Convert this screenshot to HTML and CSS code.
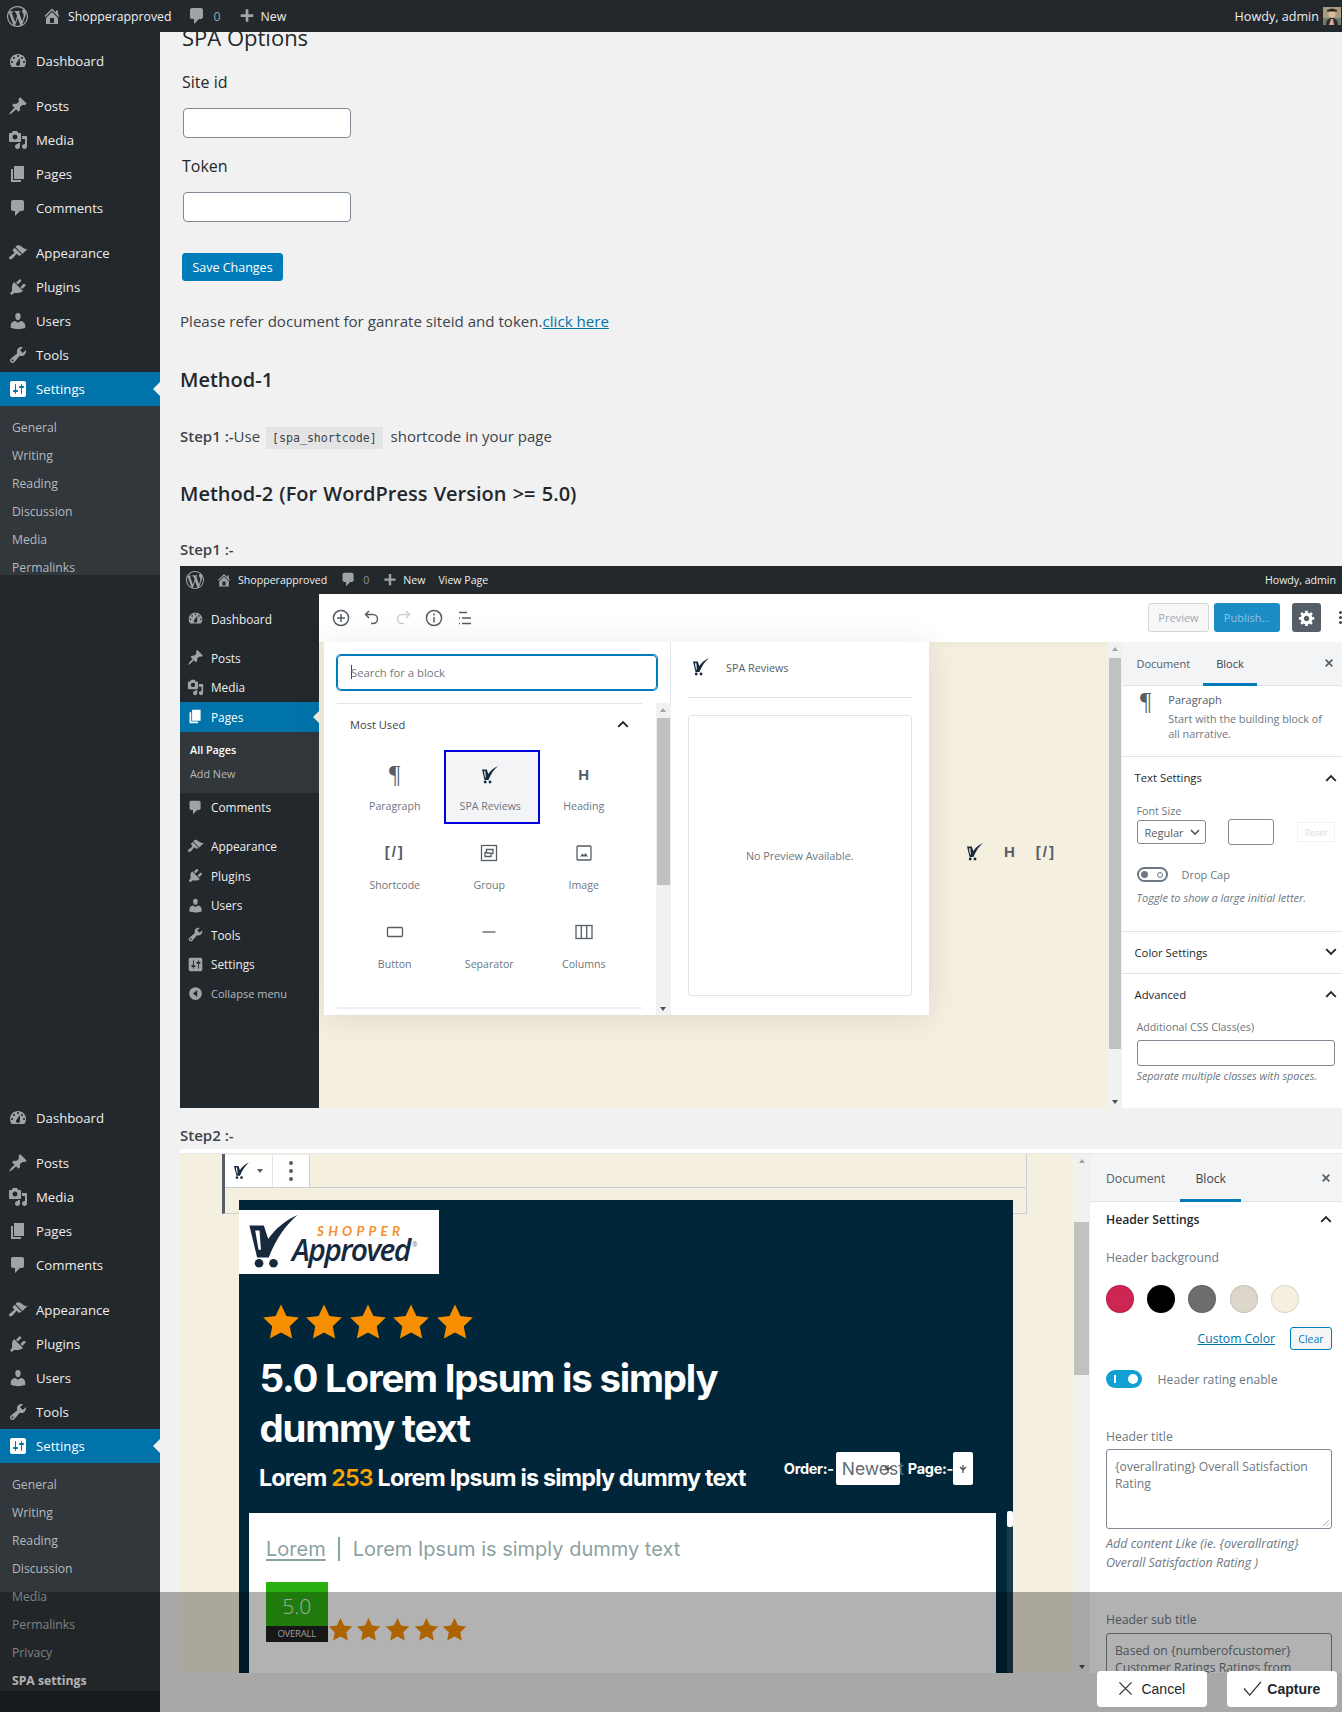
FILE: index.html
```html
<!DOCTYPE html>
<html>
<head>
<meta charset="utf-8">
<title>SPA settings</title>
<link rel="stylesheet" href="styles.css">
</head>
<body>
<!-- icon sprite -->
<svg class="sprite" xmlns="http://www.w3.org/2000/svg">
  <symbol id="i-wp" viewBox="0 0 20 20"><path d="M20 10c0-5.51-4.49-10-10-10C4.48 0 0 4.49 0 10c0 5.52 4.48 10 10 10 5.51 0 10-4.48 10-10zM7.78 15.37L4.37 6.22c.55-.02 1.17-.08 1.17-.08.5-.06.44-1.13-.06-1.11 0 0-1.45.11-2.37.11-.18 0-.37 0-.58-.01C4.12 2.69 6.87 1.11 10 1.11c2.33 0 4.45.87 6.05 2.34-.68-.11-1.65.39-1.65 1.58 0 .74.45 1.36.9 2.1.35.61.55 1.36.55 2.46 0 1.49-1.4 5-1.4 5l-3.03-8.37c.54-.02.82-.17.82-.17.5-.05.44-1.25-.06-1.22 0 0-1.44.12-2.38.12-.87 0-2.33-.12-2.33-.12-.5-.03-.56 1.2-.06 1.22l.92.08 1.26 3.41zM17.41 10c.24-.64.74-1.87.43-4.25.7 1.29 1.05 2.71 1.05 4.25 0 3.29-1.73 6.24-4.4 7.78.97-2.59 1.94-5.2 2.92-7.78zM6.1 18.09C3.12 16.65 1.11 13.53 1.11 10c0-1.3.23-2.48.72-3.59C3.25 10.3 4.67 14.2 6.1 18.09zm4.03-6.63l2.58 6.98c-.86.29-1.76.45-2.71.45-.79 0-1.57-.11-2.29-.33.81-2.38 1.62-4.74 2.42-7.1z"/></symbol>
  <symbol id="i-home" viewBox="0 0 20 20"><path d="M16 8.5l1.53 1.53-1.06 1.06L10 4.62l-6.47 6.47-1.06-1.06L10 2.5l4 4v-2h2v4zm-6-2.46l6 5.99V18H4v-5.97zM12 17v-5H8v5h4z"/></symbol>
  <symbol id="i-plus" viewBox="0 0 20 20"><path d="M17 8v3h-5.5v5.5h-3V11H3V8h5.5V2.5h3V8z"/></symbol>
  <symbol id="i-dash" viewBox="0 0 20 20"><path fill-rule="evenodd" d="M3.76 16h12.48c1.1-1.37 1.76-3.11 1.76-5 0-4.42-3.58-8-8-8s-8 3.58-8 8c0 1.89.66 3.63 1.76 5zM10 4c.55 0 1 .45 1 1s-.45 1-1 1-1-.45-1-1 .45-1 1-1zM6 6c.55 0 1 .45 1 1s-.45 1-1 1-1-.45-1-1 .45-1 1-1zm8 0c.55 0 1 .45 1 1s-.45 1-1 1-1-.45-1-1 .45-1 1-1zm-5.37 5.55L12 7v6c0 1.1-.9 2-2 2s-2-.9-2-2c0-.57.24-1.08.63-1.45zM4 10c.55 0 1 .45 1 1s-.45 1-1 1-1-.45-1-1 .45-1 1-1zm12 0c.55 0 1 .45 1 1s-.45 1-1 1-1-.45-1-1 .45-1 1-1z"/></symbol>
  <symbol id="i-pin" viewBox="0 0 20 20"><path d="M10.44 3.02l1.82-1.82 6.36 6.35-1.83 1.82c-1.05-.68-2.48-.57-3.41.36l-.75.75c-.92.93-1.04 2.35-.35 3.41l-1.83 1.82-2.41-2.41-2.8 2.79c-.42.42-3.38 2.71-3.8 2.29s1.86-3.39 2.28-3.81l2.79-2.79L4.1 9.36l1.83-1.82c1.05.69 2.48.57 3.4-.36l.75-.75c.93-.92 1.05-2.35.36-3.41z"/></symbol>
  <symbol id="i-media" viewBox="0 0 20 20"><path fill-rule="evenodd" d="M13 11V4c0-.55-.45-1-1-1h-1.67L9 1H5L3.67 3H2c-.55 0-1 .45-1 1v7c0 .55.45 1 1 1h10c.55 0 1-.45 1-1zM7 4.5c1.38 0 2.5 1.12 2.5 2.5S8.38 9.5 7 9.5 4.5 8.38 4.5 7 5.62 4.5 7 4.5zM14 6h5v10.5c0 1.38-1.12 2.5-2.5 2.5S14 17.88 14 16.5s1.12-2.5 2.5-2.5c.17 0 .34.02.5.05V9h-3V6zm-4 8.05V13h2v3.5c0 1.38-1.12 2.5-2.5 2.5S7 17.88 7 16.5 8.12 14 9.5 14c.17 0 .34.02.5.05z"/></symbol>
  <symbol id="i-page" viewBox="0 0 20 20"><path d="M6 15V2h10v13H6zm-1 1h8v2H3V5h2v11z"/></symbol>
  <symbol id="i-comment" viewBox="0 0 20 20"><path d="M5 2h9c1.1 0 2 .9 2 2v7c0 1.1-.9 2-2 2h-2l-5 5v-5H5c-1.1 0-2-.9-2-2V4c0-1.1.9-2 2-2z"/></symbol>
  <symbol id="i-brush" viewBox="0 0 20 20"><path d="M14.48 11.06L7.41 3.99l1.5-1.5c.5-.56 2.3-.47 3.51.32 1.21.8 1.43 1.28 2.91 2.1 1.18.64 2.45 1.26 4.45.85zm-.71.71L6.7 4.7 4.93 6.47c-.39.39-.39 1.02 0 1.41l1.06 1.06c.39.39.39 1.03 0 1.42-.6.6-1.43 1.11-2.21 1.69-.35.26-.7.53-1.01.84C1.43 13.23.4 14.98 1.4 15.98c.99 1 2.74-.03 4.08-1.37.31-.31.58-.66.85-1.02.57-.78 1.08-1.61 1.69-2.21.39-.39 1.02-.39 1.41 0l1.06 1.06c.39.39 1.02.39 1.41 0z"/></symbol>
  <symbol id="i-plug" viewBox="0 0 20 20"><path d="M13.11 4.36L9.87 7.6 8 5.73l3.24-3.24c.35-.34 1.05-.2 1.56.32.52.51.66 1.21.31 1.55zm-8 1.77l.91-1.12 9.01 9.01-1.19.84c-.71.71-2.63 1.16-3.82 1.16H6.14L4.9 17.26c-.59.59-1.54.59-2.12 0-.59-.58-.59-1.53 0-2.12l1.24-1.24v-3.88c0-1.13.4-3.19 1.09-3.89zm7.26 3.97l3.24-3.24c.34-.35 1.04-.21 1.55.31.52.51.66 1.21.31 1.55l-3.24 3.25z"/></symbol>
  <symbol id="i-user" viewBox="0 0 20 20"><path d="M10 9.25c-2.27 0-2.73-3.44-2.73-3.44C7 4.02 7.82 2 9.97 2c2.16 0 2.98 2.02 2.71 3.81 0 0-.41 3.44-2.68 3.44zm0 2.57L12.72 10c2.39 0 4.52 2.33 4.52 4.53v2.49s-3.65 1.13-7.24 1.13c-3.65 0-7.24-1.13-7.24-1.13v-2.49c0-2.25 1.94-4.48 4.47-4.48z"/></symbol>
  <symbol id="i-tool" viewBox="0 0 20 20"><path fill-rule="evenodd" d="M16.68 9.77c-1.34 1.34-3.3 1.67-4.95.99l-5.41 6.52c-.99.99-2.59.99-3.58 0s-.99-2.59 0-3.57l6.52-5.42c-.68-1.65-.35-3.61.99-4.95 1.28-1.28 3.12-1.62 4.72-1.06l-2.89 2.89 2.82 2.82 2.86-2.87c.53 1.58.18 3.39-1.08 4.65zM3.81 16.21c.4.39 1.04.39 1.43 0 .4-.4.4-1.04 0-1.43-.39-.4-1.03-.4-1.43 0-.39.39-.39 1.03 0 1.43z"/></symbol>
  <symbol id="i-sets" viewBox="0 0 20 20"><path fill-rule="evenodd" d="M18 16V4c0-1.1-.9-2-2-2H4c-1.1 0-2 .9-2 2v12c0 1.1.9 2 2 2h12c1.1 0 2-.9 2-2zM8 11h1c.55 0 1 .45 1 1s-.45 1-1 1H8v1.5c0 .28-.22.5-.5.5s-.5-.22-.5-.5V13H6c-.55 0-1-.45-1-1s.45-1 1-1h1V5.5c0-.28.22-.5.5-.5s.5.22.5.5V11zm5-2h-1c-.55 0-1-.45-1-1s.45-1 1-1h1V5.5c0-.28.22-.5.5-.5s.5.22.5.5V7h1c.55 0 1 .45 1 1s-.45 1-1 1h-1v5.5c0 .28-.22.5-.5.5s-.5-.22-.5-.5V9z"/></symbol>
  <symbol id="i-collapse" viewBox="0 0 20 20"><path fill-rule="evenodd" d="M10 2.5a7.5 7.5 0 1 1 0 15 7.5 7.5 0 0 1 0-15zM12 6l-5 4 5 4z"/></symbol>
  <symbol id="i-star" viewBox="0 0 20 20"><path d="M10 .8l2.85 6 6.55.85-4.8 4.55 1.25 6.5L10 15.5l-5.85 3.2 1.25-6.5L.6 7.65l6.55-.85z"/></symbol>
  <symbol id="i-spa" viewBox="0 0 50 56"><path fill-rule="evenodd" d="M0 11h15l4.5 14C27 14 38 5 50 0 38 10 28 24 20 44H8zM6 16l3.5 20H12l-1.500-20z"/><circle cx="10" cy="50" r="4.5"/><circle cx="25" cy="50" r="4.5"/></symbol>
  <symbol id="i-up" viewBox="0 0 12 8"><path d="M1.2 6.8L6 2l4.8 4.8" fill="none" stroke="currentColor" stroke-width="1.9"/></symbol>
  <symbol id="i-down" viewBox="0 0 12 8"><path d="M1.2 1.2L6 6l4.8-4.8" fill="none" stroke="currentColor" stroke-width="1.9"/></symbol>
  <symbol id="i-x" viewBox="0 0 12 12"><path d="M2 2l8 8M10 2l-8 8" fill="none" stroke="currentColor" stroke-width="2"/></symbol>
</svg>

<div class="page">
  <header class="adminbar">
    <svg class="ab-logo"><use href="#i-wp"/></svg>
    <svg class="ab-home"><use href="#i-home"/></svg>
    <span class="ab-site">Shopperapproved</span>
    <svg class="ab-comment"><use href="#i-comment"/></svg>
    <span class="ab-count">0</span>
    <svg class="ab-plus"><use href="#i-plus"/></svg>
    <span class="ab-new">New</span>
    <span class="ab-howdy">Howdy, admin</span>
    <svg class="ab-avatar" viewBox="0 0 18 18"><rect width="18" height="18" fill="#a89a7c"/><rect y="11" width="18" height="7" fill="#6f7c6a"/><circle cx="9" cy="7" r="3.5" fill="#e2b8a0"/><path d="M4 4.5h10V3L9 1.500 4 3z" fill="#2a2422"/><path d="M3 18c0-5 3-7 6-7s6 2 6 7z" fill="#2d2a2c"/><path d="M8 12h2l1 6H6z" fill="#d8a89a"/></svg>
  </header>

  <div class="wrap">
    <nav class="adminmenu">
      <div class="menu-group first">
        <a class="mi single"><svg><use href="#i-dash"/></svg>Dashboard</a>
        <a class="mi gap"><svg><use href="#i-pin"/></svg>Posts</a>
        <a class="mi"><svg><use href="#i-media"/></svg>Media</a>
        <a class="mi"><svg><use href="#i-page"/></svg>Pages</a>
        <a class="mi"><svg><use href="#i-comment"/></svg>Comments</a>
        <a class="mi gap"><svg><use href="#i-brush"/></svg>Appearance</a>
        <a class="mi"><svg><use href="#i-plug"/></svg>Plugins</a>
        <a class="mi"><svg><use href="#i-user"/></svg>Users</a>
        <a class="mi"><svg><use href="#i-tool"/></svg>Tools</a>
        <a class="mi current"><svg><use href="#i-sets"/></svg>Settings</a>
        <div class="submenu short">
          <a>General</a><a>Writing</a><a>Reading</a><a>Discussion</a><a>Media</a><a>Permalinks</a>
        </div>
      </div>
      <div class="menu-group second">
        <a class="mi single"><svg><use href="#i-dash"/></svg>Dashboard</a>
        <a class="mi gap"><svg><use href="#i-pin"/></svg>Posts</a>
        <a class="mi"><svg><use href="#i-media"/></svg>Media</a>
        <a class="mi"><svg><use href="#i-page"/></svg>Pages</a>
        <a class="mi"><svg><use href="#i-comment"/></svg>Comments</a>
        <a class="mi gap"><svg><use href="#i-brush"/></svg>Appearance</a>
        <a class="mi"><svg><use href="#i-plug"/></svg>Plugins</a>
        <a class="mi"><svg><use href="#i-user"/></svg>Users</a>
        <a class="mi"><svg><use href="#i-tool"/></svg>Tools</a>
        <a class="mi current"><svg><use href="#i-sets"/></svg>Settings</a>
        <div class="submenu">
          <a>General</a><a>Writing</a><a>Reading</a><a>Discussion</a><a>Media</a><a>Permalinks</a><a>Privacy</a><a class="on">SPA settings</a>
        </div>
        <a class="mi gap-small"><svg><use href="#i-comment"/></svg></a>
      </div>
    </nav>

    <main class="content">
      <form class="options">
        <h1>SPA Options</h1>
        <label class="opt-label first-label">Site id</label>
        <input class="opt-input" type="text">
        <label class="opt-label">Token</label>
        <input class="opt-input" type="text">
        <button class="save" type="button">Save Changes</button>
      </form>
      <p class="refer">Please refer document for ganrate siteid and token.<a>click here</a></p>
      <h2 class="method one">Method-1</h2>
      <p class="stepline"><b>Step1 :-</b>Use <code>[spa_shortcode]</code> shortcode in your page</p>
      <h2 class="method two">Method-2 (For WordPress Version &gt;= 5.0)</h2>
      <p class="steptitle"><b>Step1 :-</b></p>

      <!-- screenshot 1 : inserter -->
      <section class="shot one">
        <div class="mini-bar">
          <svg class="mb-logo"><use href="#i-wp"/></svg>
          <svg class="mb-home"><use href="#i-home"/></svg>
          <span class="mb-site">Shopperapproved</span>
          <svg class="mb-comment"><use href="#i-comment"/></svg>
          <span class="mb-count">0</span>
          <svg class="mb-plus"><use href="#i-plus"/></svg>
          <span class="mb-new">New</span>
          <span class="mb-view">View Page</span>
          <span class="mb-howdy">Howdy, admin</span>
        </div>
        <div class="shot-body">
          <div class="mini-menu">
            <a class="mm mm-first"><svg><use href="#i-dash"/></svg>Dashboard</a>
            <a class="mm mm-gap"><svg><use href="#i-pin"/></svg>Posts</a>
            <a class="mm"><svg><use href="#i-media"/></svg>Media</a>
            <a class="mm mm-on"><svg><use href="#i-page"/></svg>Pages</a>
            <div class="mm-sub"><a class="strong">All Pages</a><a>Add New</a></div>
            <a class="mm"><svg><use href="#i-comment"/></svg>Comments</a>
            <a class="mm mm-gap"><svg><use href="#i-brush"/></svg>Appearance</a>
            <a class="mm"><svg><use href="#i-plug"/></svg>Plugins</a>
            <a class="mm"><svg><use href="#i-user"/></svg>Users</a>
            <a class="mm"><svg><use href="#i-tool"/></svg>Tools</a>
            <a class="mm"><svg><use href="#i-sets"/></svg>Settings</a>
            <a class="mm dim"><svg><use href="#i-collapse"/></svg>Collapse menu</a>
          </div>
          <div class="editor">
            <div class="ed-toolbar">
              <div class="ed-tools">
                <svg viewBox="0 0 20 20"><circle cx="10" cy="10" r="7.6"/><path d="M10 6v8M6 10h8"/></svg>
                <svg viewBox="0 0 20 20"><path d="M7 3L3.5 6.5 7 10M4 6.5h7a4.5 4.5 0 0 1 0 9H9"/></svg>
                <svg class="off" viewBox="0 0 20 20"><path d="M13 3l3.5 3.5L13 10M16 6.5H9a4.5 4.5 0 0 0 0 9h2"/></svg>
                <svg viewBox="0 0 20 20"><circle cx="10" cy="10" r="7.6"/><path d="M10 9v5.5M10 5.5v2"/></svg>
                <svg viewBox="0 0 20 20"><path d="M4 4.5h8M7 10h9M7 15.5h9M4 10h1M4 15.5h1"/></svg>
              </div>
              <div class="ed-actions">
                <span class="btn-preview">Preview</span>
                <span class="btn-publish">Publish...</span>
                <span class="btn-gear"><svg viewBox="0 0 20 20"><path fill-rule="evenodd" d="M18 12h-2.18c-.17.7-.44 1.35-.81 1.93l1.54 1.54-2.1 2.1-1.54-1.54c-.58.36-1.23.64-1.91.81V19H8v-2.18c-.68-.17-1.33-.44-1.91-.81l-1.54 1.54-2.12-2.12 1.54-1.54c-.36-.58-.63-1.23-.8-1.89H1V9h2.17c.17-.66.44-1.31.8-1.89L2.43 5.570l2.1-2.1 1.54 1.54c.58-.37 1.23-.64 1.93-.81V2h3v2.18c.68.17 1.33.44 1.91.8l1.54-1.54 2.12 2.12-1.54 1.54c.37.58.64 1.23.81 1.9H18V12zm-8.500 1.500c1.66 0 3-1.34 3-3s-1.34-3-3-3-3 1.34-3 3 1.34 3 3 3z"/></svg></span>
                <span class="btn-dots"><i></i><i></i><i></i></span>
              </div>
            </div>
            <div class="ed-main">
              <div class="canvas">
                <div class="mini-icons">
                  <svg class="spa-ic"><use href="#i-spa"/></svg>
                  <span class="g-h">H</span>
                  <span class="g-code">[/]</span>
                </div>
                <!-- block inserter popover -->
                <div class="inserter">
                  <div class="ins-left">
                    <div class="ins-search"><i class="caret"></i>Search for a block</div>
                    <div class="ins-list">
                      <div class="ins-blocks">
                        <div class="ins-head"><span>Most Used</span><svg><use href="#i-up"/></svg></div>
                        <div class="ins-grid">
                          <div class="blk"><span class="g-para">¶</span><label>Paragraph</label></div>
                          <div class="blk sel"><svg class="spa-ic"><use href="#i-spa"/></svg><label>SPA Reviews</label></div>
                          <div class="blk"><span class="g-h">H</span><label>Heading</label></div>
                          <div class="blk low"><span class="g-code">[/]</span><label>Shortcode</label></div>
                          <div class="blk low"><svg class="bi" viewBox="0 0 20 20"><rect x="2.5" y="2.5" width="15" height="15"/><path d="M7.5 6.5H14v4h-2v3H6v-4h1.5zM7.5 10h4"/></svg><label>Group</label></div>
                          <div class="blk low"><svg class="bi" viewBox="0 0 20 20"><rect x="3" y="3" width="14" height="14" rx="1"/><path class="solid" d="M6 13.5l2.5-3 1.5 1.500 1.500-2 2.500 3.500z"/></svg><label>Image</label></div>
                          <div class="blk low"><svg class="bi" viewBox="0 0 20 20"><rect x="2.5" y="5.5" width="15" height="9" rx="1"/></svg><label>Button</label></div>
                          <div class="blk low"><svg class="bi" viewBox="0 0 20 20"><path d="M3.5 10h13"/></svg><label>Separator</label></div>
                          <div class="blk low"><svg class="bi" viewBox="0 0 20 20"><rect x="2" y="3.5" width="16" height="13"/><path d="M7.3 3.5v13M12.7 3.5v13"/></svg><label>Columns</label></div>
                        </div>
                        <div class="ins-rule"></div>
                      </div>
                      <div class="sbar small"><i class="arr up"></i><i class="thumb"></i><i class="arr dn"></i></div>
                    </div>
                  </div>
                  <div class="ins-right">
                    <div class="ins-pv-head"><svg class="spa-ic"><use href="#i-spa"/></svg><span>SPA Reviews</span></div>
                    <div class="ins-pv-box">No Preview Available.</div>
                  </div>
                </div>
              </div>
              <div class="sbar canvas-bar"><i class="arr up"></i><i class="thumb"></i><i class="arr dn"></i></div>
              <aside class="side">
                <div class="tabs">
                  <span class="tab">Document</span>
                  <span class="tab active">Block</span>
                  <svg class="tab-x"><use href="#i-x"/></svg>
                </div>
                <div class="card-para">
                  <span class="g-para">¶</span>
                  <div>
                    <div class="card-title">Paragraph</div>
                    <div class="card-desc">Start with the building block of all narrative.</div>
                  </div>
                </div>
                <div class="ps text-settings">
                  <div class="ps-head"><span>Text Settings</span><svg><use href="#i-up"/></svg></div>
                  <div class="ps-label">Font Size</div>
                  <div class="fs-row">
                    <span class="fs-select">Regular<svg><use href="#i-down"/></svg></span>
                    <span class="fs-input"></span>
                    <span class="fs-reset">Reset</span>
                  </div>
                  <div class="dc-row"><span class="toggle-off"><i></i><b></b></span><span>Drop Cap</span></div>
                  <div class="ps-help">Toggle to show a large initial letter.</div>
                </div>
                <div class="ps closed"><div class="ps-head"><span>Color Settings</span><svg><use href="#i-down"/></svg></div></div>
                <div class="ps adv">
                  <div class="ps-head"><span>Advanced</span><svg><use href="#i-up"/></svg></div>
                  <div class="ps-label">Additional CSS Class(es)</div>
                  <div class="css-input"></div>
                  <div class="ps-help">Separate multiple classes with spaces.</div>
                </div>
              </aside>
            </div>
          </div>
        </div>
      </section>

      <p class="steptitle step2"><b>Step2 :-</b></p>

      <!-- screenshot 2 : block settings -->
      <section class="shot two">
        <div class="canvas2">
          <div class="outline"></div>
          <div class="bk-toolbar">
            <span class="bk-type"><svg class="spa-ic"><use href="#i-spa"/></svg><i class="tri"></i></span>
            <span class="bk-more"><i></i><i></i><i></i></span>
          </div>
          <div class="widget">
            <div class="wg-logo">
              <svg class="wg-cart"><use href="#i-spa"/></svg>
              <div class="wg-word"><span class="w-shop">SHOPPER</span><span class="w-appr">Approved<sup>®</sup></span></div>
            </div>
            <div class="wg-stars">
              <svg><use href="#i-star"/></svg><svg><use href="#i-star"/></svg><svg><use href="#i-star"/></svg><svg><use href="#i-star"/></svg><svg><use href="#i-star"/></svg>
            </div>
            <div class="wg-title">5.0 Lorem Ipsum is simply<br>dummy text</div>
            <div class="wg-row">
              <div class="wg-sub">Lorem <em>253</em> Lorem Ipsum is simply dummy text</div>
              <div class="wg-ctrl">
                <span>Order:-</span>
                <span class="wg-sel newest">Newest<svg viewBox="0 0 10 10"><path d="M2 3l3 3 3-3M5 1v8"/></svg></span>
                <span>Page:-</span>
                <span class="wg-sel pg"><svg viewBox="0 0 10 10"><path d="M2 3l3 3 3-3M5 1v8"/></svg></span>
              </div>
            </div>
            <div class="wg-reviews">
              <div class="wg-panel">
                <div class="wg-tabs"><a>Lorem</a><i></i><span>Lorem Ipsum is simply dummy text</span></div>
                <div class="wg-score">
                  <div class="badge"><div class="badge-num">5.0</div><div class="badge-cap">OVERALL</div></div>
                  <div class="small-stars">
                    <svg><use href="#i-star"/></svg><svg><use href="#i-star"/></svg><svg><use href="#i-star"/></svg><svg><use href="#i-star"/></svg><svg><use href="#i-star"/></svg>
                  </div>
                </div>
              </div>
              <div class="wg-scroll"><i></i></div>
            </div>
          </div>
        </div>
        <div class="sbar canvas-bar two"><i class="arr up"></i><i class="thumb"></i><i class="arr dn"></i></div>
        <aside class="side2">
          <div class="tabs">
            <span class="tab">Document</span>
            <span class="tab active">Block</span>
            <svg class="tab-x"><use href="#i-x"/></svg>
          </div>
          <div class="s2-body">
            <div class="s2-head"><span>Header Settings</span><svg><use href="#i-up"/></svg></div>
            <div class="s2-label bg-label">Header background</div>
            <div class="swatches">
              <i class="sw-a"></i><i class="sw-b"></i><i class="sw-c"></i><i class="sw-d"></i><i class="sw-e"></i>
            </div>
            <div class="custom-row"><a>Custom Color</a><span class="clear">Clear</span></div>
            <div class="tg-row"><span class="toggle-on"><i></i><b></b></span><span>Header rating enable</span></div>
            <div class="s2-label title-label">Header title</div>
            <div class="s2-area">{overallrating} Overall Satisfaction Rating
              <svg class="grip" viewBox="0 0 10 10"><path d="M9 2L2 9M9 6L6 9"/></svg>
            </div>
            <div class="s2-help">Add content Like (ie. {overallrating}<br>Overall Satisfaction Rating )</div>
            <div class="s2-label sub-label">Header sub title</div>
            <div class="s2-area tall">Based on {numberofcustomer} Customer Ratings Ratings from</div>
          </div>
        </aside>
      </section>
    </main>
  </div>

  <!-- capture tool dim layer -->
  <div class="dim-layer"></div>
  <div class="capture-bar">
    <button class="cap-btn" type="button"><svg viewBox="0 0 16 16"><path d="M1.5 1.5l13 13M14.5 1.5l-13 13"/></svg>Cancel</button>
    <button class="cap-btn ok" type="button"><svg viewBox="0 0 20 16"><path d="M1 8l6 7L19 1"/></svg>Capture</button>
  </div>
</div>
</body>
</html>
```

FILE: styles.css
```css
* { box-sizing: border-box; }
body { margin: 0; font-family: "Open Sans", "Noto Sans", sans-serif; color: #23282d; background: #f1f1f1; }
a { text-decoration: none; }
.sprite { display: none; }

.page { position: relative; width: 1342px; height: 1712px; overflow: hidden; background: #f1f1f1; }

/* admin bar */
.adminbar { display: flex; align-items: center; height: 32px; background: #23282d; color: #eee; font-size: 12.3px; fill: #9ea3a8; }
.ab-logo { width: 21px; height: 21px; margin-left: 7px; }
.ab-home { width: 20px; height: 20px; margin-left: 14px; }
.ab-site { margin-left: 6px; }
.ab-comment { width: 20px; height: 20px; margin-left: 15px; }
.ab-count { margin-left: 7px; color: #9ea3a8; }
.ab-plus { width: 18px; height: 18px; margin-left: 17px; fill: #a0a5aa; }
.ab-new { margin-left: 5px; }
.ab-howdy { margin-left: auto; font-size: 12.6px; }
.ab-avatar { width: 18px; height: 18px; margin: 0 1px 0 4px; }

.wrap { display: flex; height: 1680px; }

/* left menu */
.adminmenu { width: 160px; flex: none; background: #23282d; font-size: 13.2px; color: #eee; }
.menu-group { height: 0; }
.menu-group.first { height: 1069px; padding-top: 12px; }
.menu-group.second { padding-top: 0; }
.mi { display: flex; align-items: center; height: 34px; padding-left: 8px; fill: #9ea3a8; }
.mi svg { width: 20px; height: 20px; margin-right: 8px; flex: none; }
.mi.gap { margin-top: 11px; }
.mi.gap-small { margin-top: 12px; }
.mi.current { position: relative; background: #0073aa; color: #fff; fill: #fff; }
.mi.current::after { content: ""; position: absolute; right: 0; top: 10px; border: 7px solid transparent; border-right-color: #f1f1f1; border-left-width: 0; }
.submenu { padding: 8px 0 0; background: #32373c; font-size: 12.2px; color: #b4b9be; height: 228px; }
.submenu.short { height: 169px; overflow: hidden; }
.submenu a { display: block; height: 28px; line-height: 28px; padding-left: 12px; }
.submenu a.on { color: #fff; font-weight: 700; }

/* options page */
.content { flex: 1; min-width: 0; padding-left: 20px; overflow: hidden; }
.options { padding-left: 2px; display: flex; flex-direction: column; align-items: flex-start; }
h1 { margin: -9px 0 0; font-size: 22px; font-weight: 400; line-height: 29px; color: #23282d; }
.opt-label { margin-top: 17px; font-size: 16px; font-weight: 500; line-height: 22px; }
.first-label { margin-top: 19px; }
.opt-input { width: 168px; height: 30px; margin: 15px 0 0 1px; background: #fff; border: 1px solid #7e8993; border-radius: 4px; }
.save { margin-top: 31px; width: 101px; height: 28px; padding: 0; background: #007cba; border: 1px solid #007cba; border-radius: 3px; color: #fff; font: 12.5px "Open Sans", sans-serif; }
.refer { margin: 28px 0 0; font-size: 15.1px; line-height: 24px; color: #3c434a; }
.refer a { color: #0073aa; text-decoration: underline; }
.method { margin: 33px 0 0; font-size: 20px; font-weight: 600; line-height: 28px; color: #23282d; }
.method.two { margin-top: 31px; word-spacing: 1px; }
.stepline { margin: 29px 0 0; font-size: 15px; line-height: 26px; color: #3c434a; }
.stepline b, .steptitle b { font-weight: 600; }
code { display: inline-block; margin: 0 4px 0 2px; padding: 0 6px; background: #e4e4e4; font: 11.6px/22px "DejaVu Sans Mono", monospace; }
.steptitle { margin: 29px 0 0; font-size: 15px; line-height: 24px; color: #3c434a; }
.steptitle.step2 { margin-top: 15px; }

/* screenshots */
.shot { width: 1162px; overflow: hidden; }
.shot.one { margin-top: 5px; height: 542px; display: flex; flex-direction: column; background: #23282d; }
.shot.two { margin-top: 2px; height: 524px; display: flex; background: #fff; padding-top: 4px; }

/* screenshot 1: bar */
.mini-bar { display: flex; align-items: center; height: 27.5px; flex: none; background: #23282d; color: #eee; fill: #9ea3a8; font-size: 10.6px; }
.mb-logo { width: 18px; height: 18px; margin-left: 6px; }
.mb-home { width: 16px; height: 16px; margin-left: 12px; }
.mb-site { margin-left: 6px; }
.mb-comment { width: 17px; height: 17px; margin-left: 13px; }
.mb-count { margin-left: 6px; color: #8b9095; }
.mb-plus { width: 16px; height: 16px; margin-left: 13px; }
.mb-new { margin-left: 5px; }
.mb-view { margin-left: 13px; }
.mb-howdy { margin-left: auto; margin-right: 6px; }

.shot-body { display: flex; flex: 1; min-height: 0; }
.mini-menu { width: 139px; flex: none; padding-top: 10.5px; font-size: 11.8px; color: #eee; fill: #9ea3a8; }
.mm { display: flex; align-items: center; height: 29.5px; padding-left: 7px; }
.mm svg { width: 17px; height: 17px; margin-right: 7px; flex: none; }
.mm-gap { margin-top: 9.5px; }
.mm-on { background: #0073aa; color: #fff; fill: #fff; position: relative; }
.mm-on::after { content: ""; position: absolute; right: 0; top: 9px; border: 6px solid transparent; border-right-color: #f5efe0; border-left-width: 0; }
.mm-sub { padding: 6px 0 7px 10px; background: #32373c; color: #b4b9be; font-size: 10.8px; }
.mm-sub a { display: block; height: 24px; line-height: 24px; }
.mm-sub a.strong { color: #fff; font-weight: 600; }
.mm.dim { color: #b4b9be; font-size: 11px; }

.editor { flex: 1; min-width: 0; display: flex; flex-direction: column; }
.ed-toolbar { display: flex; align-items: center; justify-content: space-between; height: 48px; flex: none; background: #fff; }
.ed-tools { display: flex; gap: 11px; padding-left: 12px; }
.ed-tools svg { width: 20px; height: 20px; fill: none; stroke: #555d66; stroke-width: 1.5; }
.ed-tools svg.off { stroke: #ccd0d4; }
.ed-actions { display: flex; align-items: center; font-size: 11px; }
.btn-preview { display: flex; align-items: center; justify-content: center; width: 61px; height: 29px; border: 1px solid #d4d6d8; border-radius: 3px; background: #f7f7f7; color: #a2aab2; }
.btn-publish { display: flex; align-items: center; justify-content: center; width: 66px; height: 29px; margin-left: 5px; border-radius: 3px; background: #1b8cc6; color: #8cc4e0; }
.btn-gear { display: flex; align-items: center; justify-content: center; width: 29px; height: 29px; margin-left: 12px; border-radius: 3px; background: #555d66; fill: #fff; }
.btn-gear svg { width: 18px; height: 18px; }
.btn-dots { display: flex; flex-direction: column; gap: 2px; margin-left: 18px; }
.btn-dots i { display: block; width: 3px; height: 3px; background: #40464d; border-radius: 50%; }

.ed-main { display: flex; flex: 1; min-height: 0; }
.canvas { position: relative; flex: 1; background: #f5efe0; box-shadow: inset 0 8px 8px -8px rgba(0,0,0,.06); }
.mini-icons { display: flex; align-items: center; gap: 21px; padding: 201px 0 0 648px; color: #3c434a; }
.spa-ic { width: 16px; height: 18px; fill: #17293d; flex: none; }
.g-h { font: 700 15px/18px "Liberation Sans", sans-serif; color: #555d66; }
.g-code { font: 700 15px/18px "Liberation Sans", sans-serif; color: #555d66; letter-spacing: 2px; }
.g-para { font: 400 25px/18px "Liberation Serif", serif; color: #555d66; }

/* inserter popover */
.inserter { position: absolute; left: 4.5px; top: 0; width: 605px; height: 373px; display: flex; background: #fff; box-shadow: 0 3px 30px rgba(25,30,35,.1); }
.ins-left { width: 347.5px; flex: none; display: flex; flex-direction: column; border-right: 1px solid #e2e4e7; }
.ins-search { display: flex; align-items: center; height: 34.5px; margin: 13.5px 0 0 13.5px; width: 319.5px; padding-left: 13px; border: 1px solid #007cba; box-shadow: 0 0 0 1px #007cba; border-radius: 4px; font-size: 11.3px; color: #72777c; flex: none; }
.caret { width: 1px; height: 14px; background: #40464d; margin-right: -1px; }
.ins-list { display: flex; flex: 1; min-height: 0; margin-top: 13.5px; }
.ins-blocks { width: 304.5px; margin: 0 14px 0 13.5px; flex: none; border-top: 1px solid #e2e4e7; position: relative; }
.ins-head { display: flex; justify-content: space-between; align-items: center; height: 40px; padding: 0 13px; font-size: 11.1px; font-weight: 500; color: #3c434a; margin-bottom: 5.5px; }
.ins-head svg, .ps-head svg, .s2-head svg { width: 12px; height: 8px; color: #23282d; }
.ins-grid { display: grid; grid-template-columns: repeat(3, 94.5px); grid-auto-rows: 79px; margin-left: 10.5px; }
.blk { position: relative; display: flex; flex-direction: column; align-items: center; height: 74px; padding-top: 16px; color: #6c7781; }
.blk.low { padding-top: 14px; }
.blk label { position: absolute; top: 49px; font-size: 10.6px; }
.blk.sel { margin: 0 -3.5px 0 1.5px; padding: 14px 4px 0 0; background: #f3f4f5; border: 2px solid #0000e0; }
.blk.sel label { top: 47px; left: 0; right: 3px; text-align: center; }
.bi { width: 20px; height: 20px; fill: none; stroke: #555d66; stroke-width: 1.3; }
.bi .solid { fill: #555d66; stroke: none; }
.ins-rule { position: absolute; left: 0; right: 0; top: 303px; border-top: 2px solid #edeff0; }
.sbar { position: relative; background: #f1f1f1; flex: none; }
.sbar .thumb { position: absolute; left: 1px; right: 1px; background: #c1c1c1; }
.sbar .arr { position: absolute; left: 50%; margin-left: -3px; border: 3px solid transparent; }
.sbar .arr.up { top: 5px; border-bottom: 4px solid #a3a3a3; border-top: 0; }
.sbar .arr.dn { bottom: 4px; border-top: 4px solid #505050; border-bottom: 0; }
.sbar.small { width: 15px; }
.sbar.small .thumb { top: 14.5px; height: 167px; }
.canvas-bar { width: 14px; }
.canvas-bar .thumb { top: 16px; height: 391px; }
.ins-right { flex: 1; padding: 0 17px; }
.ins-pv-head { display: flex; align-items: center; height: 56.5px; padding: 0 0 4px 5px; gap: 17px; border-bottom: 1px solid #e2e4e7; font-size: 10.8px; color: #555d66; }
.ins-pv-box { display: flex; align-items: center; justify-content: center; height: 281px; margin-top: 17px; border: 1px solid #e2e4e7; border-radius: 3px; font-size: 10.8px; color: #6c7781; }

/* sidebar panels */
.side { width: 220px; flex: none; background: #fff; font-size: 11px; color: #6c7781; }
.tabs { position: relative; display: flex; background: #f3f4f5; font-size: 11px; color: #555d66; }
.side .tabs { height: 44.5px; padding-left: 1.5px; border-bottom: 1px solid #e2e4e7; }
.tab { display: flex; align-items: center; padding: 0 13px; margin-bottom: -1px; }
.tab.active { color: #3c434a; border-bottom: 3px solid #007cba; padding-top: 3px; }
.tab-x { position: absolute; right: 8px; top: 50%; margin-top: -5px; width: 10px; height: 10px; color: #555d66; }
.card-para { display: flex; height: 71px; padding: 6.5px 0 0 18px; gap: 17px; border-bottom: 1px solid #e2e4e7; }
.card-para .g-para { margin-top: 1px; line-height: 16px; }
.card-title { line-height: 14px; color: #555d66; }
.card-desc { margin-top: 4.5px; width: 165px; font-size: 10.8px; line-height: 15px; }
.ps { padding: 0 5px 0 12.5px; border-bottom: 1px solid #e2e4e7; }
.ps-head { display: flex; justify-content: space-between; align-items: center; height: 41px; font-size: 11.3px; color: #23282d; font-weight: 500; }
.text-settings { height: 174.5px; }
.ps-label { margin: 6px 0 0 2px; line-height: 14px; font-size: 10.7px; }
.adv .ps-label { margin-top: 5px; }
.closed { height: 42px; }
.adv { border-bottom: 0; }
.fs-row { display: flex; align-items: center; margin: 1px 0 0 2px; }
.fs-select { display: flex; align-items: center; justify-content: space-between; width: 69.5px; height: 24px; padding: 0 5px 0 7px; border: 1px solid #7e8993; border-radius: 3px; background: #fff; color: #555d66; }
.fs-select svg { width: 10px; height: 7px; }
.fs-input { width: 46px; height: 26px; margin-left: 22px; border: 1px solid #7e8993; border-radius: 3px; background: #fff; }
.fs-reset { display: flex; align-items: center; justify-content: center; width: 38px; height: 20px; margin-left: 23px; border: 1px solid #f1f2f3; color: #d9dbdd; font-size: 9px; }
.dc-row { display: flex; align-items: center; gap: 14px; margin: 22px 0 0 2px; }
.toggle-off { position: relative; width: 31px; height: 15px; border: 2px solid #6c7781; border-radius: 8px; }
.toggle-off i { position: absolute; left: 2px; top: 2px; width: 7px; height: 7px; border-radius: 50%; background: #6c7781; }
.toggle-off b { position: absolute; right: 3px; top: 2.5px; width: 6px; height: 6px; border-radius: 50%; border: 1px solid #6c7781; }
.ps-help { margin: 9px 0 0 2px; line-height: 14px; font-size: 11px; font-style: italic; color: #6c7781; }
.css-input { width: 198px; height: 26px; margin: 6px 0 0 2px; border: 1px solid #7e8993; border-radius: 3px; background: #fff; }
.adv .ps-help { margin-top: 3px; font-size: 10.8px; }

/* screenshot 2 */
.canvas2 { position: relative; width: 893px; flex: none; background: #f5efe0; padding-top: 1px; border-top: 1px solid #e8e8e8; }
.outline { position: absolute; left: 42px; top: 0; width: 804.5px; height: 60px; border-left: 3px solid #555d66; border-right: 1px solid #ccd0d4; border-bottom: 1px solid #ccd0d4; }
.bk-toolbar { position: relative; z-index: 1; display: flex; width: 84.5px; height: 33px; margin-left: 45px; background: #fff; border-bottom: 1px solid #ccd0d4; border-right: 1px solid #ccd0d4; }
.bk-type { display: flex; align-items: center; width: 48px; padding-left: 9px; gap: 8px; border-right: 1px solid #e2e4e7; }
.bk-type .spa-ic { width: 15px; height: 18px; }
.tri { border: 3px solid transparent; border-top: 4px solid #555d66; border-bottom: 0; }
.bk-more { display: flex; flex-direction: column; justify-content: center; align-items: center; flex: 1; gap: 4px; }
.bk-more i { width: 4px; height: 4px; border-radius: 50%; background: #555d66; }
.canvas2::after { content: ""; position: absolute; left: 45px; right: 46.5px; top: 33px; border-top: 1px solid #ccd0d4; }

.widget { position: relative; z-index: 1; width: 773.6px; height: 490px; margin: 12px 0 0 59px; background: #012639; color: #fff; font-family: Inter, "Open Sans", sans-serif; padding-top: 10px; }
.wg-logo { display: flex; width: 199.6px; height: 64px; background: #fff; padding: 5px 0 0 10px; color: #17293d; }
.wg-cart { width: 49px; height: 54px; fill: #17293d; flex: none; }
.wg-word { display: flex; flex-direction: column; margin: 11px 0 0 -6px; }
.w-shop { margin-left: 25px; height: 10px; font: italic 700 13.5px/10px "Lato", sans-serif; letter-spacing: 4.2px; color: #f58f2f; }
.w-appr { height: 28px; font: italic 600 30px/28px "Open Sans", sans-serif; letter-spacing: -1.6px; color: #17293d; white-space: nowrap; }
.w-appr sup { font-size: 7px; font-style: normal; vertical-align: 14px; line-height: 0; color: #7f8a96; letter-spacing: 0; margin-left: 2px; }
.wg-stars { display: flex; gap: 5.4px; margin: 29px 0 0 23px; fill: #f78f00; }
.wg-stars svg { width: 38px; height: 38px; }
.wg-title { margin: 12px 0 0 20.5px; font-size: 38.4px; font-weight: 700; line-height: 50px; letter-spacing: -1.2px; white-space: nowrap; }
.wg-row { display: flex; height: 33px; margin-top: -1.5px; padding: 0 39.6px 0 20px; }
.wg-sub { padding-top: 12px; font-size: 23.3px; font-weight: 700; line-height: 28px; letter-spacing: -.8px; white-space: nowrap; }
.wg-sub em { font-style: normal; font-weight: 600; color: #f9a602; }
.wg-ctrl { display: flex; align-items: center; margin-left: auto; font-size: 14.5px; font-weight: 700; letter-spacing: -.3px; }
.wg-sel { position: relative; display: flex; align-items: center; height: 33px; background: #fff; border-radius: 2px; color: #5f6d73; font-size: 17.5px; font-weight: 400; letter-spacing: 0; }
.wg-sel svg { position: absolute; width: 10px; height: 10px; fill: none; stroke: #444; stroke-width: 1.2; }
.wg-sel.newest { width: 64px; margin: 0 8px 0 2px; padding-left: 6px; }
.wg-sel.newest svg { right: 7px; top: 12px; }
.wg-sel.pg { width: 20px; margin-left: 0; }
.wg-sel.pg svg { right: 5px; top: 12px; }
.wg-reviews { display: flex; height: 170px; margin: 28.5px 0 0 10px; }
.wg-panel { width: 747px; background: #fff; padding: 24px 0 0 17px; }
.wg-tabs { display: flex; align-items: center; height: 24px; font-size: 20px; color: #8ca2a2; }
.wg-tabs a { text-decoration: underline; text-underline-offset: 3px; }
.wg-tabs i { width: 2px; height: 24px; margin: 0 13px 0 12px; background: #8ca2a2; }
.wg-score { display: flex; align-items: flex-end; margin-top: 20.5px; }
.badge { width: 61.5px; height: 60.5px; background: #2bb012; display: flex; flex-direction: column; }
.badge-num { flex: 1; display: flex; align-items: center; justify-content: center; padding-top: 5px; font: 300 21px "Open Sans", sans-serif; color: #e8f5e5; }
.badge-cap { height: 16px; background: #222; color: #ddd; text-align: center; font: 9.5px/16px "Open Sans", sans-serif; letter-spacing: -.2px; }
.small-stars { display: flex; gap: 3.7px; fill: #f78f00; }
.small-stars svg { width: 25px; height: 25px; }
.wg-scroll { position: relative; flex: 1; }
.wg-scroll::after { content: ""; position: absolute; right: 0; top: 0; bottom: 0; width: 6px; background: #1a3a4c; }
.wg-scroll i { position: absolute; z-index: 1; right: 0; top: -2px; width: 6px; height: 16px; background: #fff; border-radius: 2px; }

.canvas-bar.two { width: 17px; border-top: 1px solid #e8e8e8; }
.canvas-bar.two .thumb { top: 68px; height: 153px; }
.side2 { flex: 1; min-width: 0; background: #fff; color: #6c7781; font-size: 12.2px; }
.side2 .tabs { height: 49px; font-size: 12.2px; padding-left: 1px; border-bottom: 1px solid #e2e4e7; border-top: 1px solid #e8e8e8; }
.side2 .tab { padding: 0 15px; }
.side2 .tab.active { padding-top: 3px; }
.side2 .tab-x { right: 11px; }
.s2-body { padding: 8px 10px 0 16px; }
.s2-head { display: flex; justify-content: space-between; align-items: center; height: 18px; color: #23282d; font-weight: 600; }
.s2-label { line-height: 18px; }
.bg-label { margin-top: 20.5px; }
.swatches { display: flex; gap: 13.2px; margin-top: 18.5px; }
.swatches i { width: 28px; height: 28px; border-radius: 50%; box-shadow: inset 0 0 0 1px rgba(0,0,0,.1); }
.sw-a { background: #cd2653; }
.sw-b { background: #000; }
.sw-c { background: #6d6d6d; }
.sw-d { background: #dcd7ca; }
.sw-e { background: #f5efe0; }
.custom-row { display: flex; justify-content: flex-end; align-items: center; gap: 15px; margin-top: 14px; }
.custom-row a { color: #0073aa; text-decoration: underline; }
.clear { display: flex; align-items: center; justify-content: center; width: 42px; height: 23px; border: 1px solid #007cba; border-radius: 3px; background: #f3f5f6; color: #007cba; font-size: 10.5px; }
.tg-row { display: flex; align-items: center; gap: 16px; margin-top: 20px; }
.toggle-on { position: relative; width: 35.6px; height: 18px; border-radius: 9px; background: #11a0d2; }
.toggle-on i { position: absolute; left: 8px; top: 5px; width: 2px; height: 8px; background: #fff; }
.toggle-on b { position: absolute; right: 4px; top: 4px; width: 10px; height: 10px; border-radius: 50%; background: #fff; }
.title-label { margin-top: 39.5px; }
.s2-area { position: relative; width: 226px; height: 80px; margin-top: 3.5px; padding: 7.5px 8px; border: 1px solid #7e8993; border-radius: 3px; line-height: 17px; color: #6c7781; }
.grip { position: absolute; right: 1px; bottom: 1px; width: 9px; height: 9px; fill: none; stroke: #9aa; stroke-width: 1; }
.s2-help { margin-top: 6px; font-size: 12.5px; font-style: italic; line-height: 18.5px; }
.sub-label { margin-top: 39px; }
.s2-area.tall { margin-top: 4px; height: 80px; }

/* screenshot tool layer */
.dim-layer { position: absolute; left: 0; right: 0; top: 1592px; bottom: 0; background: rgba(0,0,0,.3); z-index: 2; }
.capture-bar { position: absolute; z-index: 3; left: 1097px; top: 1671px; display: flex; gap: 20.5px; }
.cap-btn { display: flex; align-items: center; justify-content: center; gap: 8px; width: 109.5px; height: 35.5px; padding: 0; background: #fff; border: 0; border-radius: 4px; font: 14px "Liberation Sans", sans-serif; color: #23282d; }
.cap-btn svg { width: 15px; height: 15px; fill: none; stroke: #333; stroke-width: 1.4; }
.cap-btn.ok { font-weight: 700; gap: 5px; }
.cap-btn.ok svg { width: 19px; height: 15px; }
```
